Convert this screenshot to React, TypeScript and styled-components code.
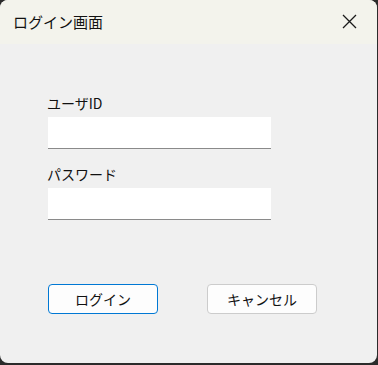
import styled, { createGlobalStyle } from "styled-components";

const Global = createGlobalStyle`
  html, body {
    margin: 0;
    padding: 0;
    background: #2b2b2b;
  }
  body {
    font-family: "Noto Sans CJK JP", "Noto Sans", sans-serif;
  }
`;

const Window = styled.div`
  width: 377px;
  height: 363px;
  background: #f0f0f0;
  border-radius: 8px;
  overflow: hidden;
  display: flex;
  flex-direction: column;
`;

const TitleBar = styled.div`
  height: 44px;
  background: #f3f3ec;
  display: flex;
  align-items: center;
  justify-content: space-between;
  padding: 0 20px 0 13px;
  box-sizing: border-box;
`;

const Title = styled.span`
  font-size: 15px;
  color: #111;
  margin-top: -1px;
`;

const CloseIcon = styled.svg`
  width: 15px;
  height: 15px;
  margin-top: -1px;
`;

const Body = styled.div`
  flex: 1;
  padding: 49px 0 0 48px;
  display: flex;
  flex-direction: column;
`;

const Label = styled.label`
  font-size: 14px;
  color: #111;
  line-height: 20px;
  margin-left: -1px;
`;

const Input = styled.input`
  width: 223px;
  height: 32px;
  box-sizing: border-box;
  border: none;
  border-bottom: 1px solid #8a8a8a;
  background: #fff;
  margin: 4px 0 15px;
  outline: none;
`;

const Buttons = styled.div`
  display: flex;
  gap: 49px;
  margin-top: 49px;
`;

const Button = styled.button<{ $primary?: boolean }>`
  width: 110px;
  height: 30px;
  box-sizing: border-box;
  border-radius: 4px;
  border: 1px solid ${(p) => (p.$primary ? "#0078d4" : "#cccccc")};
  background: #fdfdfd;
  font-family: "Noto Sans CJK JP", sans-serif;
  font-size: 14px;
  color: #111;
  padding: 0;
`;

export default function App() {
  return (
    <>
      <Global />
      <Window>
        <TitleBar>
          <Title>ログイン画面</Title>
          <CloseIcon viewBox="0 0 15 15">
            <path d="M1 1 L14 14 M14 1 L1 14" stroke="#1a1a1a" strokeWidth="1.3" fill="none" />
          </CloseIcon>
        </TitleBar>
        <Body>
          <Label>ユーザID</Label>
          <Input type="text" />
          <Label>パスワード</Label>
          <Input type="password" />
          <Buttons>
            <Button $primary>ログイン</Button>
            <Button>キャンセル</Button>
          </Buttons>
        </Body>
      </Window>
    </>
  );
}
